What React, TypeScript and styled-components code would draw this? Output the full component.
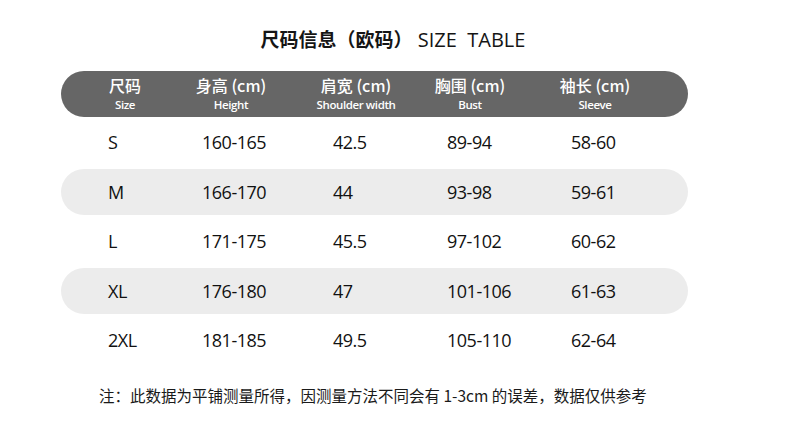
import React from "react";
import styled, { createGlobalStyle } from "styled-components";

const GlobalStyle = createGlobalStyle`
  html, body {
    margin: 0;
    padding: 0;
    background: #ffffff;
  }
  body {
    font-family: "Open Sans", "Noto Sans CJK SC", sans-serif;
    color: #111111;
  }
`;

// data columns start (relative to table left edge) and header label centres
const columns = [
  { width: 94, center: 17 },
  { width: 131, center: 29 },
  { width: 114, center: 23 },
  { width: 124, center: 23 },
  { width: 117, center: 24 },
];

const gridTemplate = columns.map((c) => `${c.width}px`).join(" ");

const headers = [
  { zh: "尺码", en: "Size" },
  { zh: "身高 (cm)", en: "Height" },
  { zh: "肩宽 (cm)", en: "Shoulder width" },
  { zh: "胸围 (cm)", en: "Bust" },
  { zh: "袖长 (cm)", en: "Sleeve" },
];

const rows = [
  ["S", "160-165", "42.5", "89-94", "58-60"],
  ["M", "166-170", "44", "93-98", "59-61"],
  ["L", "171-175", "45.5", "97-102", "60-62"],
  ["XL", "176-180", "47", "101-106", "61-63"],
  ["2XL", "181-185", "49.5", "105-110", "62-64"],
];

const Page = styled.main`
  width: 790px;
  height: 444px;
  padding-top: 27px;
  box-sizing: border-box;
`;

const Title = styled.h1`
  margin: 0;
  height: 24px;
  line-height: 24px;
  text-align: center;
  font-size: 19px;
  font-weight: 400;
  color: #151515;
  white-space: pre;
  padding-right: 4px;
`;

const TitleZh = styled.span`
  font-family: "Noto Sans CJK SC", sans-serif;
  font-weight: 700;
`;

const TitleEn = styled.span`
  font-family: "Open Sans", sans-serif;
  font-size: 20px;
  font-weight: 400;
`;

const Table = styled.section`
  margin: 20px 0 0 61px;
  width: 627px;
  display: flex;
  flex-direction: column;
`;

const HeaderBar = styled.div`
  height: 46px;
  border-radius: 23px;
  background: #666666;
  display: grid;
  grid-template-columns: ${gridTemplate};
  padding-left: 47px;
  box-sizing: border-box;
  color: #ffffff;
`;

const HeadCell = styled.div<{ $center: number }>`
  width: ${(p) => p.$center * 2}px;
  display: flex;
  flex-direction: column;
  align-items: center;
  padding-top: 5px;
  white-space: nowrap;
`;

const HeadZh = styled.span`
  font-family: "Noto Sans CJK SC", sans-serif;
  font-size: 16px;
  line-height: 18px;
  font-weight: 500;
`;

const HeadEn = styled.span`
  font-family: "Open Sans", sans-serif;
  font-size: 11.5px;
  line-height: 14px;
  margin-top: 4px;
  font-weight: 600;
  letter-spacing: -0.4px;
`;

const Body = styled.div`
  display: flex;
  flex-direction: column;
  gap: 3.5px;
  margin-top: 2px;
`;

const Row = styled.div<{ $shaded: boolean }>`
  height: 46px;
  border-radius: 23px;
  background: ${(p) => (p.$shaded ? "#ececec" : "transparent")};
  display: grid;
  grid-template-columns: ${gridTemplate};
  align-items: center;
  padding-left: 47px;
  box-sizing: border-box;
`;

const Cell = styled.span`
  font-family: "Open Sans", sans-serif;
  font-size: 18px;
  letter-spacing: -0.5px;
  color: #111111;
  white-space: nowrap;
`;

const Note = styled.p`
  margin: 22px 0 0 99px;
  font-family: "Noto Sans CJK SC", sans-serif;
  font-size: 15.5px;
  line-height: 20px;
  color: #1a1a1a;
  white-space: nowrap;
`;

const App: React.FC = () => (
  <>
    <GlobalStyle />
    <Page>
      <Title>
        <TitleZh>尺码信息（欧码）</TitleZh>
        <TitleEn>{" SIZE  TABLE"}</TitleEn>
      </Title>
      <Table>
        <HeaderBar>
          {headers.map((h, i) => (
            <HeadCell key={h.en} $center={columns[i].center}>
              <HeadZh>{h.zh}</HeadZh>
              <HeadEn>{h.en}</HeadEn>
            </HeadCell>
          ))}
        </HeaderBar>
        <Body>
          {rows.map((r, i) => (
            <Row key={r[0]} $shaded={i % 2 === 1}>
              {r.map((v, j) => (
                <Cell key={j}>{v}</Cell>
              ))}
            </Row>
          ))}
        </Body>
      </Table>
      <Note>注：此数据为平铺测量所得，因测量方法不同会有 1-3cm 的误差，数据仅供参考</Note>
    </Page>
  </>
);

export default App;
